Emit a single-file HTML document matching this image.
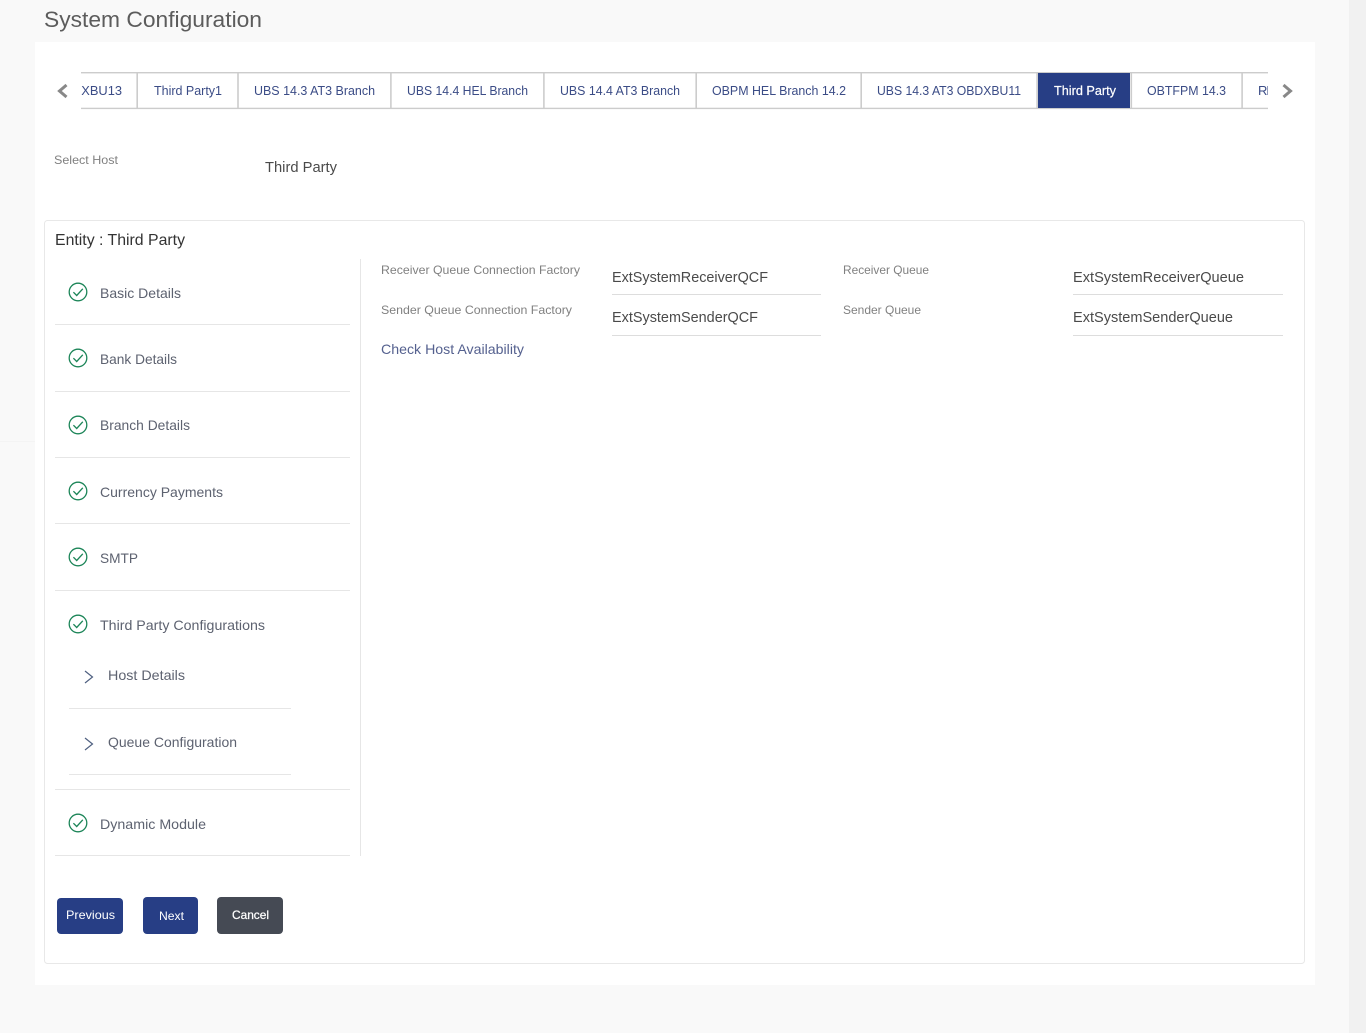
<!DOCTYPE html>
<html lang="en">
<head>
<meta charset="utf-8">
<title>System Configuration</title>
<style>
html,body{margin:0;padding:0;width:1366px;height:1033px;overflow:hidden;background:#f9f9f9}
svg{display:block;position:absolute;left:0;top:0}
text{font-family:"Liberation Sans",sans-serif}
.tab{font-size:13px;fill:#3b4c86}
.lab{font-size:12px;fill:#808080}
.val{font-size:15px;fill:#4a4a4a}
.nav{font-size:14px;fill:#5d6270}
.btn{font-size:12px;fill:#fff}
</style>
</head>
<body>
<svg width="1366" height="1033" viewBox="0 0 1366 1033" xmlns="http://www.w3.org/2000/svg">
<defs>
<clipPath id="strip"><rect x="81" y="60" width="1187" height="60"/></clipPath>
<g id="chk" fill="none">
<circle cx="0" cy="0" r="8.8" stroke="#1c8558" stroke-width="1.3"/>
<path d="M-4.6 0.2 L-1.3 3.5 L4.8 -3.2" stroke="#1c8558" stroke-width="1.3"/>
</g>
</defs>

<rect x="1349" y="0" width="17" height="1033" fill="#f1f1f1"/>
<rect x="0" y="441" width="35" height="1" fill="#f4f4f4"/>
<rect x="35" y="42" width="1280" height="943" fill="#fff"/>

<text x="44" y="27" font-size="22" fill="#5c5c5c" textLength="218" lengthAdjust="spacingAndGlyphs">System Configuration</text>

<!-- tabs -->
<g clip-path="url(#strip)">
<rect x="81" y="72" width="1187" height="1.4" fill="#ccc"/>
<rect x="81" y="107.7" width="1187" height="1.4" fill="#ccc"/>
<rect x="136.4" y="72" width="1.6" height="37" fill="#ccc"/>
<rect x="237.2" y="72" width="1.6" height="37" fill="#ccc"/>
<rect x="390.1" y="72" width="1.6" height="37" fill="#ccc"/>
<rect x="543.1" y="72" width="1.6" height="37" fill="#ccc"/>
<rect x="695.4" y="72" width="1.6" height="37" fill="#ccc"/>
<rect x="860.4" y="72" width="1.6" height="37" fill="#ccc"/>
<rect x="1036.3" y="72" width="1.6" height="37" fill="#ccc"/>
<rect x="1130.5" y="72" width="1.6" height="37" fill="#ccc"/>
<rect x="1241.3" y="72" width="1.6" height="37" fill="#ccc"/>
<rect x="1038" y="73" width="92" height="35" fill="#273e85"/>
<text class="tab" x="72" y="95" textLength="50" lengthAdjust="spacingAndGlyphs">DXBU13</text>
<text class="tab" x="154" y="95" textLength="68" lengthAdjust="spacingAndGlyphs">Third Party1</text>
<text class="tab" x="254" y="95" textLength="121" lengthAdjust="spacingAndGlyphs">UBS 14.3 AT3 Branch</text>
<text class="tab" x="407" y="95" textLength="121" lengthAdjust="spacingAndGlyphs">UBS 14.4 HEL Branch</text>
<text class="tab" x="560" y="95" textLength="120" lengthAdjust="spacingAndGlyphs">UBS 14.4 AT3 Branch</text>
<text class="tab" x="712" y="95" textLength="134" lengthAdjust="spacingAndGlyphs">OBPM HEL Branch 14.2</text>
<text class="tab" x="877" y="95" textLength="144" lengthAdjust="spacingAndGlyphs">UBS 14.3 AT3 OBDXBU11</text>
<text class="tab" x="1054" y="95" textLength="62" lengthAdjust="spacingAndGlyphs" style="fill:#fff;stroke:#fff;stroke-width:.2">Third Party</text>
<text class="tab" x="1147" y="95" textLength="79" lengthAdjust="spacingAndGlyphs">OBTFPM 14.3</text>
<text class="tab" x="1258" y="95" letter-spacing="-1.2">RI</text>
</g>
<path d="M66.5 85 L59.5 91 L66.5 97" fill="none" stroke="#888" stroke-width="3"/>
<path d="M1283.5 85 L1290.5 91 L1283.5 97" fill="none" stroke="#888" stroke-width="3"/>

<text class="lab" x="54" y="164" textLength="64" lengthAdjust="spacingAndGlyphs">Select Host</text>
<text class="val" x="265" y="172" textLength="72" lengthAdjust="spacingAndGlyphs" style="font-size:14.5px">Third Party</text>

<!-- entity box -->
<rect x="44.5" y="220.5" width="1260" height="743" rx="3" fill="#fff" stroke="#e8e8e8"/>
<text x="55" y="245" font-size="16" fill="#333" textLength="130" lengthAdjust="spacingAndGlyphs">Entity : Third Party</text>
<rect x="360" y="259" width="1" height="597" fill="#e6e6e6"/>

<!-- left nav -->
<use href="#chk" x="78" y="292"/>
<text class="nav" x="100" y="298" textLength="81" lengthAdjust="spacingAndGlyphs">Basic Details</text>
<rect x="55" y="324" width="295" height="1" fill="#e6e6e6"/>
<use href="#chk" x="78" y="358"/>
<text class="nav" x="100" y="364" textLength="77" lengthAdjust="spacingAndGlyphs">Bank Details</text>
<rect x="55" y="391" width="295" height="1" fill="#e6e6e6"/>
<use href="#chk" x="78" y="425"/>
<text class="nav" x="100" y="430" textLength="90" lengthAdjust="spacingAndGlyphs">Branch Details</text>
<rect x="55" y="457" width="295" height="1" fill="#e6e6e6"/>
<use href="#chk" x="78" y="491"/>
<text class="nav" x="100" y="497" textLength="123" lengthAdjust="spacingAndGlyphs">Currency Payments</text>
<rect x="55" y="523" width="295" height="1" fill="#e6e6e6"/>
<use href="#chk" x="78" y="557"/>
<text class="nav" x="100" y="563" textLength="38" lengthAdjust="spacingAndGlyphs">SMTP</text>
<rect x="55" y="590" width="295" height="1" fill="#e6e6e6"/>
<use href="#chk" x="78" y="624"/>
<text class="nav" x="100" y="630" textLength="165" lengthAdjust="spacingAndGlyphs">Third Party Configurations</text>
<path d="M85 671 L92.5 677 L85 683" fill="none" stroke="#4f6080" stroke-width="1.2"/>
<text class="nav" x="108" y="680" textLength="77" lengthAdjust="spacingAndGlyphs">Host Details</text>
<rect x="69" y="708" width="222" height="1" fill="#e6e6e6"/>
<path d="M85 738 L92.5 744 L85 750" fill="none" stroke="#4f6080" stroke-width="1.2"/>
<text class="nav" x="108" y="747" textLength="129" lengthAdjust="spacingAndGlyphs">Queue Configuration</text>
<rect x="69" y="774" width="222" height="1" fill="#e6e6e6"/>
<rect x="55" y="789" width="295" height="1" fill="#e6e6e6"/>
<use href="#chk" x="78" y="823"/>
<text class="nav" x="100" y="829" textLength="106" lengthAdjust="spacingAndGlyphs">Dynamic Module</text>
<rect x="55" y="855" width="295" height="1" fill="#e6e6e6"/>

<!-- form -->
<text class="lab" x="381" y="274" textLength="199" lengthAdjust="spacingAndGlyphs">Receiver Queue Connection Factory</text>
<text class="val" x="612" y="282" textLength="156" lengthAdjust="spacingAndGlyphs">ExtSystemReceiverQCF</text>
<rect x="612" y="294" width="209" height="1" fill="#ddd"/>
<text class="lab" x="843" y="274" textLength="86" lengthAdjust="spacingAndGlyphs">Receiver Queue</text>
<text class="val" x="1073" y="282" textLength="171" lengthAdjust="spacingAndGlyphs">ExtSystemReceiverQueue</text>
<rect x="1073" y="294" width="210" height="1" fill="#ddd"/>
<text class="lab" x="381" y="314" textLength="191" lengthAdjust="spacingAndGlyphs">Sender Queue Connection Factory</text>
<text class="val" x="612" y="322" textLength="146" lengthAdjust="spacingAndGlyphs">ExtSystemSenderQCF</text>
<rect x="612" y="335" width="209" height="1" fill="#ddd"/>
<text class="lab" x="843" y="314" textLength="78" lengthAdjust="spacingAndGlyphs">Sender Queue</text>
<text class="val" x="1073" y="322" textLength="160" lengthAdjust="spacingAndGlyphs">ExtSystemSenderQueue</text>
<rect x="1073" y="335" width="210" height="1" fill="#ddd"/>
<text x="381" y="354" font-size="14" fill="#55618f" textLength="143" lengthAdjust="spacingAndGlyphs">Check Host Availability</text>

<!-- buttons -->
<rect x="57" y="898" width="66" height="36" rx="4" fill="#273e85"/>
<text class="btn" x="66" y="919" textLength="49" lengthAdjust="spacingAndGlyphs">Previous</text>
<rect x="143" y="897" width="55" height="37" rx="4" fill="#273e85"/>
<text class="btn" x="159" y="920" textLength="25" lengthAdjust="spacingAndGlyphs">Next</text>
<rect x="217" y="897" width="66" height="37" rx="4" fill="#454a54"/>
<text class="btn" x="232" y="919" textLength="37" lengthAdjust="spacingAndGlyphs" style="stroke:#fff;stroke-width:.25">Cancel</text>
</svg>
</body>
</html>
